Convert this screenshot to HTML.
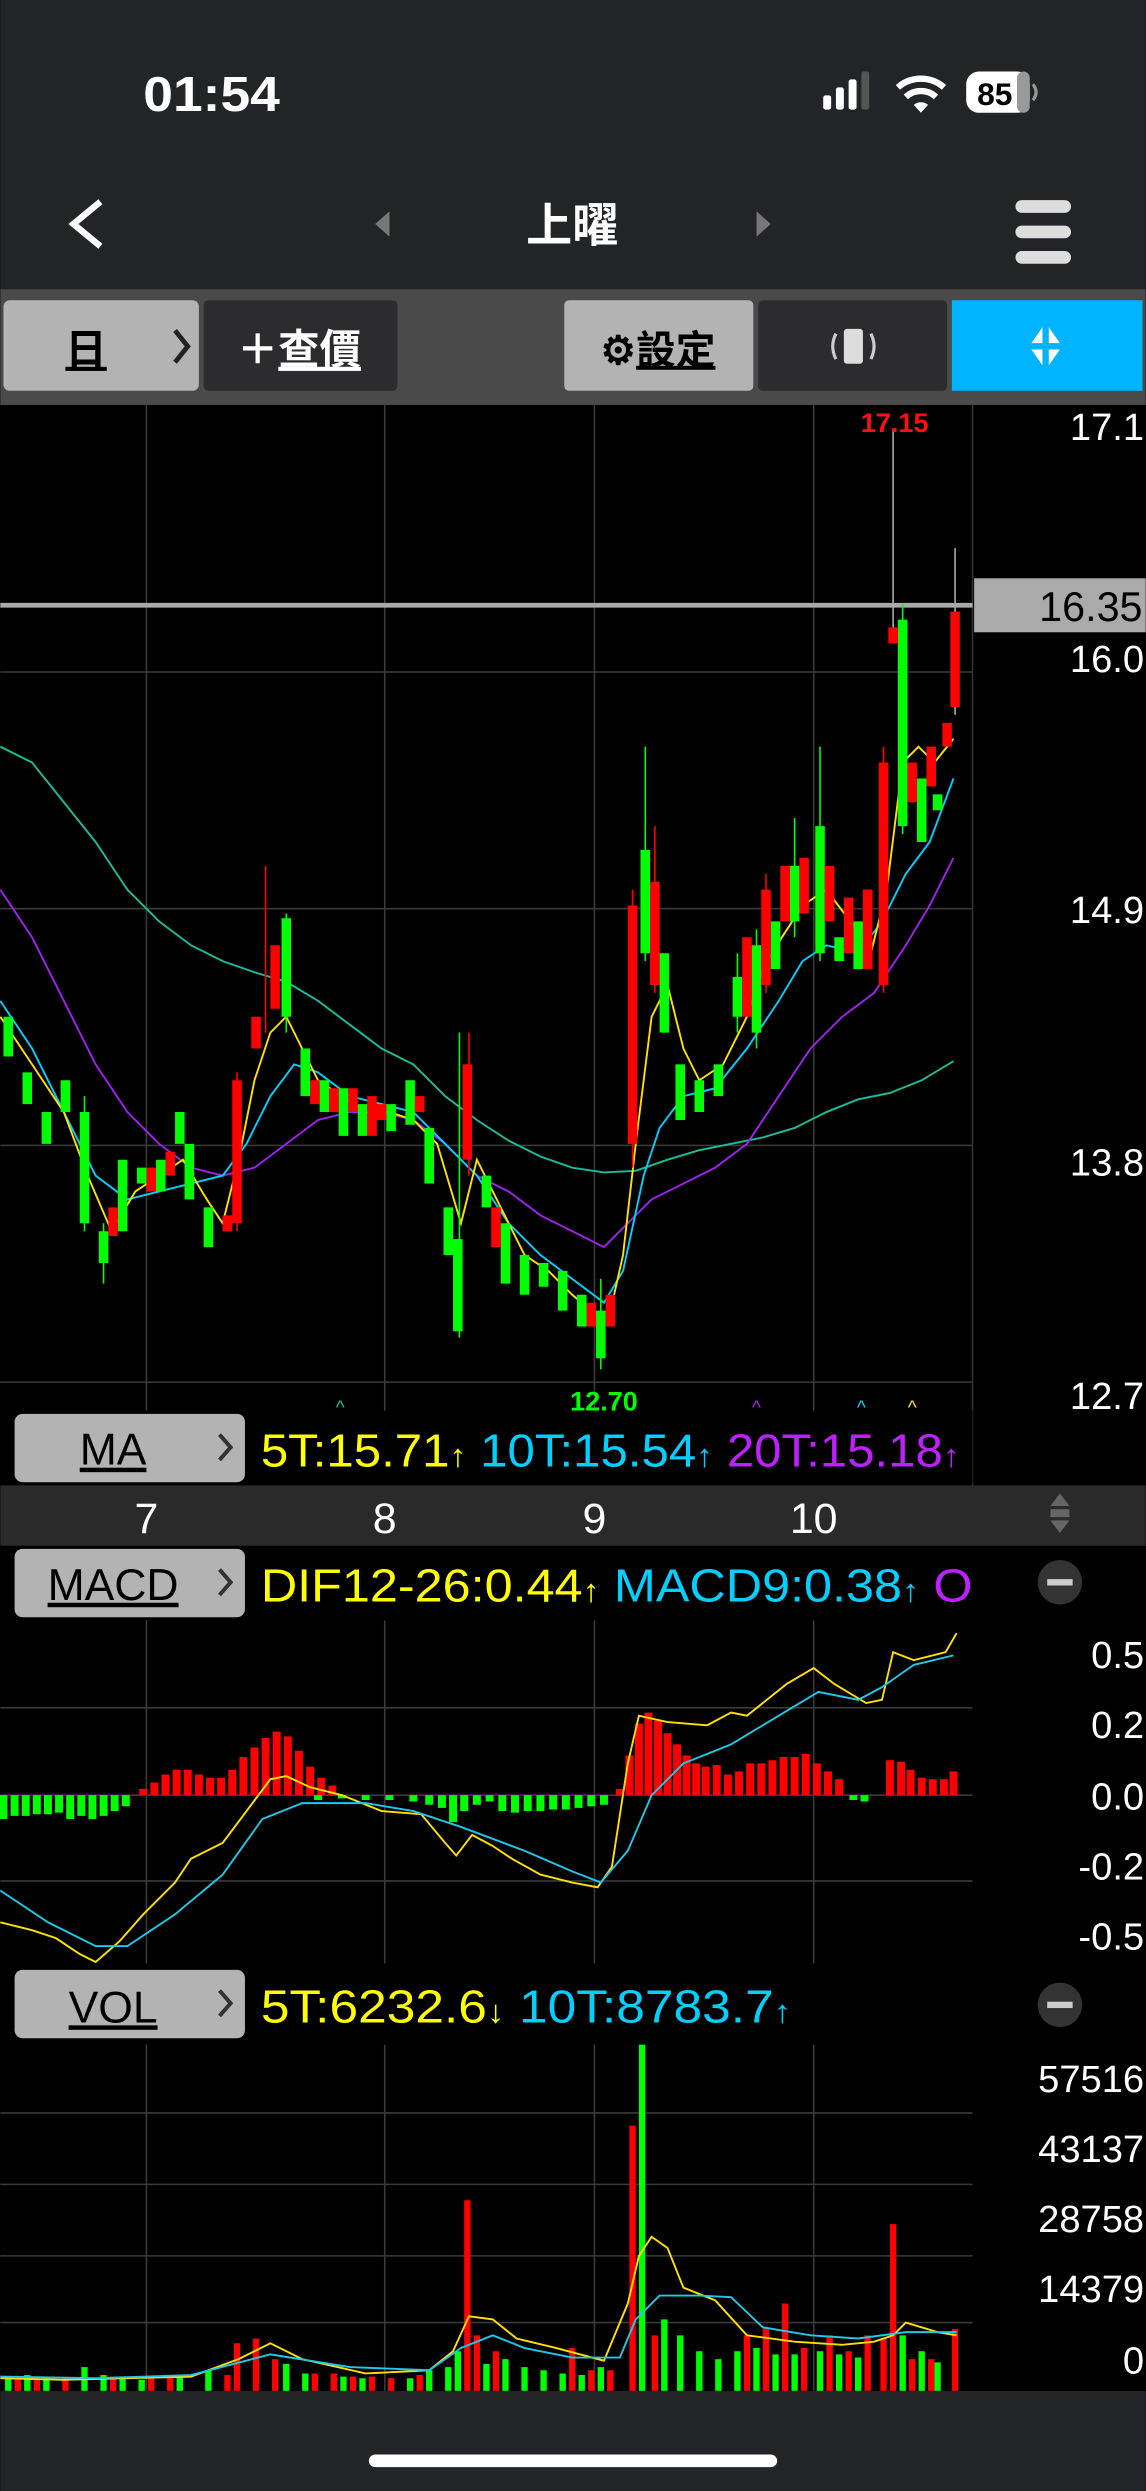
<!DOCTYPE html>
<html><head><meta charset="utf-8">
<style>
html,body{margin:0;padding:0;background:#000;}
svg{display:block}
text{font-family:"Liberation Sans","Noto Sans CJK TC",sans-serif;}
</style></head>
<body>
<svg width="1146" height="2491" viewBox="0 0 721 1568" xmlns="http://www.w3.org/2000/svg">
<!-- header -->
<rect x="0" y="0" width="721" height="182" fill="#232427"/>
<text x="90" y="70" font-size="31" font-weight="bold" fill="#fff" textLength="86" lengthAdjust="spacingAndGlyphs">01:54</text>
<rect x="518" y="60" width="5" height="9" rx="1.5" fill="#fff"/>
<rect x="526" y="55" width="5" height="14" rx="1.5" fill="#fff"/>
<rect x="534" y="50" width="5" height="19" rx="1.5" fill="#fff"/>
<rect x="542" y="45" width="5" height="24" rx="1.5" fill="#555"/>
<path d="M565 55 A22 22 0 0 1 594 55" stroke="#fff" stroke-width="4" fill="none"/>
<path d="M570 61 A14 14 0 0 1 589 61" stroke="#fff" stroke-width="4" fill="none"/>
<path d="M575 66 L579.5 71 L584 66 A7 7 0 0 0 575 66Z" fill="#fff"/>
<rect x="608" y="45" width="40" height="26" rx="8" fill="#fff"/>
<rect x="640" y="45" width="8" height="26" rx="4" fill="#999"/>
<path d="M650 53 Q654 58 650 63" stroke="#999" stroke-width="2" fill="none"/>
<text x="626" y="66" font-size="20" font-weight="bold" fill="#000" text-anchor="middle">85</text>
<path d="M63 127 L46 141 L63 155" stroke="#fff" stroke-width="4" fill="none"/>
<path d="M245 133 L236 141 L245 149Z" fill="#777"/>
<path d="M476 133 L485 141 L476 149Z" fill="#777"/>
<text x="360" y="152" font-size="29" font-weight="bold" fill="#fff" text-anchor="middle">上曜</text>
<rect x="639" y="126" width="35" height="8" rx="4" fill="#ddd"/>
<rect x="639" y="142" width="35" height="8" rx="4" fill="#ddd"/>
<rect x="639" y="158" width="35" height="8" rx="4" fill="#ddd"/>
<!-- toolbar -->
<rect x="0" y="182" width="721" height="73" fill="#4a4a4a"/>
<rect x="2" y="189" width="123" height="57" rx="4" fill="#b3b3b3"/>
<text x="54" y="229" font-size="26" font-weight="bold" fill="#000" text-anchor="middle" text-decoration="underline">日</text>
<path d="M110 208 L118 218 L110 228" stroke="#222" stroke-width="3" fill="none"/>
<rect x="128" y="189" width="122" height="57" rx="3" fill="#2c2c2e"/>
<text x="188" y="229" font-size="26" font-weight="bold" fill="#fff" text-anchor="middle">＋<tspan text-decoration="underline">查價</tspan></text>
<rect x="355" y="189" width="119" height="57" rx="3" fill="#b3b3b3"/>
<text x="414" y="229" font-size="25" font-weight="bold" fill="#000" text-anchor="middle">⚙<tspan text-decoration="underline">設定</tspan></text>
<rect x="477" y="189" width="119" height="57" rx="3" fill="#2c2c2e"/>
<rect x="531" y="207" width="12" height="22" rx="2" fill="#ddd"/>
<path d="M526 210 Q522 218 526 226 M548 210 Q552 218 548 226" stroke="#ccc" stroke-width="2" fill="none"/>
<rect x="599" y="189" width="120" height="57" fill="#00b4ff"/>
<path d="M656 206 L656 216 L649 216Z M660 206 L660 216 L667 216Z M656 230 L656 220 L649 220Z M660 230 L660 220 L667 220Z" fill="#fff"/>
<!-- main chart -->
<rect x="0" y="255" width="721" height="680" fill="#000"/>
<g stroke="#3a3a3a" stroke-width="1">
<path d="M92 255V888 M242 255V888 M374 255V888 M512 255V888"/>
<path d="M0 423H612 M0 572H612 M0 721H612 M0 870H612"/>
<path d="M92 1020V1236 M242 1020V1236 M374 1020V1236 M512 1020V1236 M0 1075H612 M0 1130H612 M0 1184H612"/>
<path d="M92 1287V1505 M242 1287V1505 M374 1287V1505 M512 1287V1505 M0 1330H612 M0 1375H612 M0 1420H612 M0 1462H612"/>
</g>
<path d="M612 255V935" stroke="#333"/>
<g font-size="24" fill="#fff" text-anchor="end">
<text x="720" y="277">17.1</text>
<text x="720" y="423">16.0</text>
<text x="720" y="581">14.9</text>
<text x="720" y="740">13.8</text>
<text x="720" y="887">12.7</text>
</g>
<path d="M0 381H612" stroke="#aaa" stroke-width="3"/>
<rect x="613" y="364" width="108" height="34" fill="#aaa"/>
<text x="719" y="391" font-size="26" fill="#000" text-anchor="end">16.35</text>
<!-- MA lines -->
<g fill="none" stroke-width="1.2">
<polyline stroke="#1abc9c" points="0,470 20,480 40,505 60,530 80,560 100,580 120,595 140,605 160,612 180,618 200,630 220,645 240,660 260,670 280,690 300,705 320,718 340,728 360,735 380,738 400,737 420,730 440,724 460,720 480,716 500,710 520,700 540,692 560,688 580,680 600,668"/>
<polyline stroke="#a020f0" points="0,560 20,590 40,630 60,670 80,700 100,720 120,735 140,740 160,735 180,720 200,705 220,700 240,700 260,705 280,720 300,740 320,750 340,765 360,775 380,785 395,770 410,755 430,745 450,735 470,720 490,690 510,660 530,640 550,625 570,595 585,570 600,540"/>
<polyline stroke="#00d0ff" points="0,630 20,660 40,700 60,740 80,755 100,750 120,745 140,740 155,720 170,690 185,670 200,675 220,690 240,695 260,700 280,720 300,740 320,770 340,790 360,805 380,820 392,800 405,740 415,710 430,690 450,685 470,660 490,630 505,605 520,595 540,600 555,580 570,550 585,530 600,490"/>
<polyline stroke="#ffe000" points="0,640 20,670 40,700 55,740 70,775 85,750 100,740 115,730 130,755 140,770 150,730 160,680 170,650 180,640 190,660 200,680 215,690 230,700 245,700 260,705 275,720 290,770 300,730 315,760 330,790 345,800 360,815 372,825 383,830 392,790 400,720 410,640 420,620 430,660 440,680 455,670 470,640 480,610 492,590 505,570 520,560 535,580 548,600 558,560 568,480 578,470 588,480 600,465"/>
</g>
<!-- wicks -->
<path stroke="#aaa" stroke-width="1" d="M562 270V400 M601 345V450"/>
<path stroke="#00ff00" stroke-width="1" d="M53 690V775 M180 575V650 M289 650V842 M378 805V862 M406 470V605 M500 515V590 M516 470V605 M568 380V525 M65 770V808 M476 585V660 M464 600V650"/>
<path stroke="#ff0000" stroke-width="1" d="M167 545V650 M295 650V740 M398 560V735 M556 470V625 M149 675V775 M412 520V625 M482 550V625"/>
<!-- bodies -->
<path stroke="#00ff00" stroke-width="6" d="M5 640V665 M17 675V695 M29 700V720 M41 680V700 M53 700V770 M65 775V795 M77 730V775 M89 735V745 M101 730V750 M113 700V720 M119 720V755 M131 760V785 M180 578V640 M192 660V690 M204 680V700 M216 685V715 M228 695V715 M246 695V712 M258 680V708 M270 710V745 M282 760V790 M288 780V838 M306 740V760 M318 770V808 M330 790V815 M342 795V810 M354 800V825 M366 815V835 M378 825V855 M406 535V600 M418 600V650 M428 670V705 M440 680V700 M452 670V690 M464 615V640 M476 595V650 M488 580V610 M500 545V580 M516 520V600 M528 590V605 M540 580V610 M568 390V520 M580 490V530 M590 500V510"/>
<path stroke="#ff0000" stroke-width="6" d="M71 760V778 M95 735V750 M107 725V740 M143 765V775 M149 680V770 M161 640V660 M173 595V635 M198 680V695 M210 685V700 M222 685V700 M234 690V715 M240 695V705 M264 690V700 M294 670V730 M312 760V785 M372 820V835 M384 815V835 M398 570V720 M412 555V620 M470 590V640 M482 560V620 M494 545V580 M506 540V575 M522 545V580 M534 565V600 M546 560V610 M556 480V620 M562 395V405 M574 480V505 M586 470V495 M596 455V470 M601 385V445"/>
<text x="563" y="272" font-size="17" font-weight="bold" fill="#ff1010" text-anchor="middle">17.15</text>
<text x="380" y="888" font-size="17" font-weight="bold" fill="#00ff00" text-anchor="middle">12.70</text>
<g font-size="12" text-anchor="middle"><text x="214" y="890" fill="#1abc9c">^</text><text x="476" y="890" fill="#a020f0">^</text><text x="542" y="890" fill="#00d0ff">^</text><text x="574" y="890" fill="#ffe000">^</text></g>
<!-- MA row -->
<rect x="0" y="888" width="612" height="46" fill="#000"/>
<rect x="9" y="890" width="145" height="43" rx="5" fill="#b3b3b3"/>
<text x="71" y="922" font-size="28" fill="#000" text-anchor="middle" text-decoration="underline">MA</text>
<path d="M138 903 L145 911 L138 919" stroke="#333" stroke-width="2.5" fill="none"/>
<text x="164" y="923" font-size="29" textLength="440" lengthAdjust="spacingAndGlyphs"><tspan fill="#ffff00">5T:15.71</tspan><tspan fill="#ffff00" font-size="20">↑</tspan><tspan fill="#00d0ff"> 10T:15.54</tspan><tspan fill="#00d0ff" font-size="20">↑</tspan><tspan fill="#c020ff"> 20T:15.18</tspan><tspan fill="#c020ff" font-size="20">↑</tspan></text>
<!-- date axis -->
<rect x="0" y="935" width="721" height="38" fill="#2a2a2a"/>
<g font-size="27" fill="#fff" text-anchor="middle"><text x="92" y="965">7</text><text x="242" y="965">8</text><text x="374" y="965">9</text><text x="512" y="965">10</text></g>
<path d="M661 948 L667 940 L673 948Z M661 957 L667 965 L673 957Z" fill="#666"/><rect x="661" y="950" width="12" height="5" fill="#666"/>
<!-- MACD row -->
<rect x="9" y="975" width="145" height="43" rx="5" fill="#b3b3b3"/>
<text x="71" y="1007" font-size="28" fill="#000" text-anchor="middle" text-decoration="underline">MACD</text>
<path d="M138 988 L145 996 L138 1004" stroke="#333" stroke-width="2.5" fill="none"/>
<text x="164" y="1008" font-size="29" textLength="448" lengthAdjust="spacingAndGlyphs"><tspan fill="#ffff00">DIF12-26:0.44</tspan><tspan fill="#ffff00" font-size="20">↑</tspan><tspan fill="#00d0ff"> MACD9:0.38</tspan><tspan fill="#00d0ff" font-size="20">↑</tspan><tspan fill="#c020ff"> O</tspan></text>
<rect x="612" y="975" width="109" height="45" fill="#000"/>
<circle cx="667" cy="996" r="14" fill="#333"/><rect x="659" y="994" width="16" height="4" fill="#ccc"/>
<g font-size="24" fill="#fff" text-anchor="end">
<text x="720" y="1050">0.5</text><text x="720" y="1094">0.2</text><text x="720" y="1139">0.0</text><text x="720" y="1183">-0.2</text><text x="720" y="1227">-0.5</text></g>
<path stroke="#00ff00" stroke-width="5" d="M2 1130V1145 M9 1130V1143 M16 1130V1143 M23 1130V1142 M30 1130V1142 M37 1130V1141 M44 1130V1145 M51 1130V1143 M58 1130V1145 M65 1130V1143 M72 1130V1140 M79 1130V1137 M200 1130V1133 M215 1130V1132 M230 1130V1133 M245 1130V1133 M260 1130V1134 M270 1130V1136 M278 1130V1138 M285 1130V1147 M292 1130V1140 M300 1130V1136 M308 1130V1134 M316 1130V1140 M324 1130V1141 M332 1130V1140 M340 1130V1140 M348 1130V1139 M356 1130V1139 M364 1130V1138 M372 1130V1137 M380 1130V1136 M537 1130V1133 M544 1130V1134"/>
<path stroke="#ff0000" stroke-width="5" d="M90 1130V1126 M97 1130V1122 M104 1130V1117 M111 1130V1114 M118 1130V1114 M125 1130V1117 M132 1130V1119 M139 1130V1119 M146 1130V1114 M153 1130V1106 M160 1130V1100 M167 1130V1094 M174 1130V1090 M181 1130V1093 M188 1130V1102 M195 1130V1112 M202 1130V1119 M209 1130V1124 M390 1130V1126 M396 1130V1105 M402 1130V1085 M408 1130V1078 M414 1130V1083 M420 1130V1091 M426 1130V1098 M432 1130V1105 M438 1130V1110 M444 1130V1112 M451 1130V1111 M458 1130V1117 M465 1130V1115 M472 1130V1110 M479 1130V1110 M486 1130V1108 M493 1130V1106 M500 1130V1106 M507 1130V1104 M514 1130V1110 M521 1130V1115 M528 1130V1120 M560 1130V1108 M567 1130V1109 M573 1130V1114 M580 1130V1119 M587 1130V1120 M594 1130V1120 M600 1130V1115"/>
<g fill="none" stroke-width="1.2">
<polyline stroke="#ffe000" points="0,1210 20,1215 35,1220 50,1230 60,1235 75,1222 90,1205 110,1185 120,1170 140,1160 155,1140 170,1120 180,1118 195,1125 215,1130 240,1140 265,1142 280,1160 287,1168 297,1155 310,1162 322,1170 340,1180 360,1185 376,1188 385,1175 395,1110 402,1080 420,1084 445,1086 460,1078 470,1080 485,1068 495,1060 512,1050 525,1060 545,1072 555,1070 562,1040 575,1045 595,1040 602,1028"/>
<polyline stroke="#20c8e8" points="0,1190 30,1210 60,1225 80,1225 110,1205 140,1180 165,1145 190,1135 230,1135 260,1140 290,1150 330,1165 360,1178 378,1185 395,1165 410,1130 430,1110 460,1098 490,1080 515,1065 540,1070 555,1062 575,1048 600,1042"/>
</g>
<!-- VOL row -->
<rect x="0" y="1236" width="721" height="51" fill="#000"/>
<rect x="9" y="1240" width="145" height="43" rx="5" fill="#b3b3b3"/>
<text x="71" y="1273" font-size="28" fill="#000" text-anchor="middle" text-decoration="underline">VOL</text>
<path d="M138 1253 L145 1261 L138 1269" stroke="#333" stroke-width="2.5" fill="none"/>
<text x="164" y="1273" font-size="29" textLength="334" lengthAdjust="spacingAndGlyphs"><tspan fill="#ffff00">5T:6232.6</tspan><tspan fill="#ffff00" font-size="20">↓</tspan><tspan fill="#00d0ff"> 10T:8783.7</tspan><tspan fill="#00d0ff" font-size="20">↑</tspan></text>
<circle cx="667" cy="1262" r="14" fill="#333"/><rect x="659" y="1260" width="16" height="4" fill="#ccc"/>
<g font-size="24" fill="#fff" text-anchor="end">
<text x="720" y="1317">57516</text><text x="720" y="1361">43137</text><text x="720" y="1405">28758</text><text x="720" y="1449">14379</text><text x="720" y="1494">0</text></g>
<path stroke="#00ff00" stroke-width="4" d="M5 1505V1497 M17 1505V1495 M29 1505V1496 M53 1505V1490 M65 1505V1495 M77 1505V1497 M89 1505V1498 M113 1505V1496 M131 1505V1492 M180 1505V1488 M192 1505V1494 M216 1505V1496 M228 1505V1497 M258 1505V1497 M270 1505V1492 M282 1505V1490 M288 1505V1480 M306 1505V1488 M318 1505V1485 M330 1505V1490 M342 1505V1492 M354 1505V1494 M366 1505V1495 M378 1505V1490 M404 1505V1287 M418 1505V1460 M428 1505V1470 M440 1505V1480 M452 1505V1485 M464 1505V1480 M476 1505V1478 M488 1505V1482 M500 1505V1482 M516 1505V1480 M528 1505V1482 M540 1505V1484 M568 1505V1470 M580 1505V1480 M590 1505V1487"/>
<path stroke="#ff0000" stroke-width="4" d="M11 1505V1497 M23 1505V1496 M41 1505V1497 M71 1505V1496 M95 1505V1497 M107 1505V1496 M143 1505V1495 M149 1505V1475 M161 1505V1472 M173 1505V1485 M198 1505V1494 M210 1505V1494 M222 1505V1496 M234 1505V1496 M246 1505V1497 M264 1505V1495 M294 1505V1385 M300 1505V1470 M312 1505V1480 M360 1505V1478 M372 1505V1492 M384 1505V1492 M398 1505V1338 M412 1505V1470 M470 1505V1470 M482 1505V1465 M494 1505V1450 M506 1505V1478 M522 1505V1470 M534 1505V1480 M546 1505V1470 M556 1505V1472 M562 1505V1400 M574 1505V1485 M586 1505V1485 M601 1505V1466"/>
<g fill="none" stroke-width="1.2">
<polyline stroke="#ffe000" points="0,1497 40,1498 80,1497 120,1496 150,1485 170,1475 190,1485 230,1494 270,1492 285,1480 295,1458 310,1460 325,1472 350,1478 380,1486 395,1450 402,1420 410,1408 420,1415 430,1440 450,1448 470,1470 500,1474 530,1476 550,1474 562,1470 570,1462 590,1468 602,1470"/>
<polyline stroke="#20c8e8" points="0,1496 60,1497 120,1495 170,1482 220,1490 270,1492 290,1478 310,1470 330,1478 360,1484 390,1484 400,1460 415,1445 440,1445 460,1446 480,1465 510,1470 540,1472 570,1468 602,1468"/>
</g>
<!-- bottom -->
<rect x="0" y="1505" width="721" height="63" fill="#232427"/>
<rect x="232" y="1545" width="257" height="8" rx="4" fill="#fff"/>
</svg>
</body></html>
